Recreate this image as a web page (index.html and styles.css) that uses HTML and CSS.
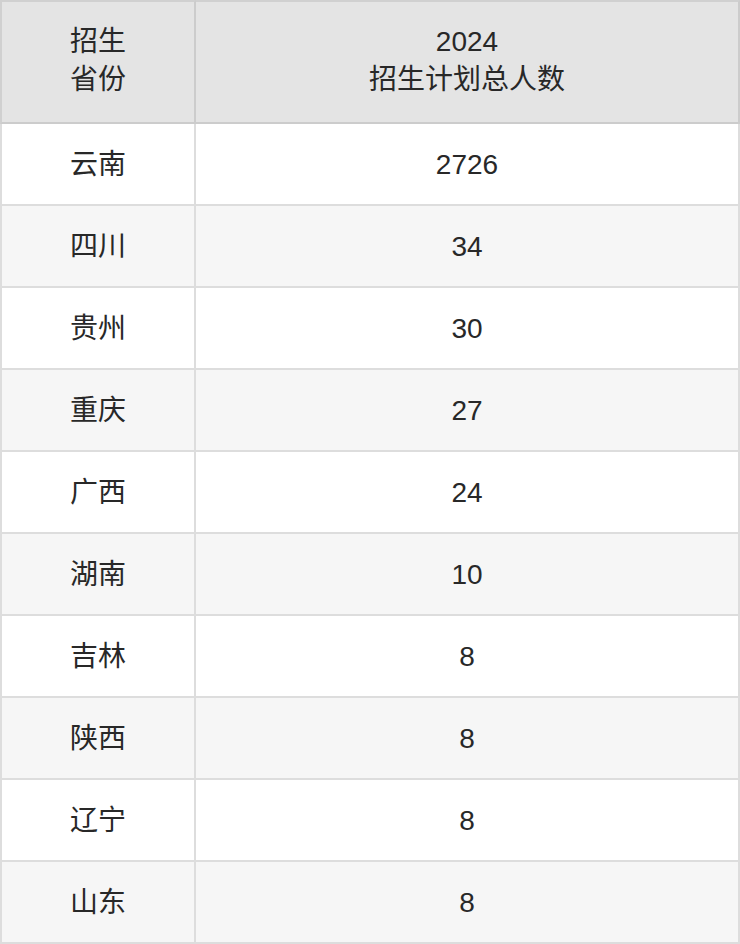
FILE: index.html
```html
<!DOCTYPE html>
<html lang="zh">
<head>
<meta charset="utf-8">
<link rel="stylesheet" href="styles.css">
</head>
<body>
<table class="plan">
  <thead>
    <tr>
      <th class="col-prov">招生<br>省份</th>
      <th class="col-num">2024<br>招生计划总人数</th>
    </tr>
  </thead>
  <tbody>
    <tr><td>云南</td><td>2726</td></tr>
    <tr><td>四川</td><td>34</td></tr>
    <tr><td>贵州</td><td>30</td></tr>
    <tr><td>重庆</td><td>27</td></tr>
    <tr><td>广西</td><td>24</td></tr>
    <tr><td>湖南</td><td>10</td></tr>
    <tr><td>吉林</td><td>8</td></tr>
    <tr><td>陕西</td><td>8</td></tr>
    <tr><td>辽宁</td><td>8</td></tr>
    <tr><td>山东</td><td>8</td></tr>
  </tbody>
</table>
</body>
</html>
```
FILE: styles.css
```css
html, body {
  margin: 0;
  padding: 0;
  background: #ffffff;
}

.plan {
  width: 740px;
  border-collapse: separate;
  border-spacing: 0;
  table-layout: fixed;
  font-family: "Liberation Sans", "Noto Sans CJK SC", sans-serif;
  font-size: 28px;
  color: #282828;
}

.plan th,
.plan td {
  text-align: center;
  vertical-align: middle;
  padding: 0;
  border-right: 2px solid #dddddd;
  border-bottom: 2px solid #dddddd;
}

.plan th:first-child,
.plan td:first-child {
  border-left: 2px solid #dddddd;
}

.col-prov {
  width: 192px;
}

.plan thead th {
  background: #e4e4e4;
  font-weight: normal;
  line-height: 38px;
  height: 76px;
  padding: 21px 0 23px;
  border-top: 2px solid #d0d0d0;
  border-bottom-color: #cccccc;
  border-right-color: #cccccc;
}

.plan thead th:first-child {
  border-left-color: #d0d0d0;
}

.plan tbody td {
  height: 78px;
  line-height: 36px;
  padding-top: 2px;
}

.plan tbody tr:nth-child(even) td {
  background: #f6f6f6;
}
```
